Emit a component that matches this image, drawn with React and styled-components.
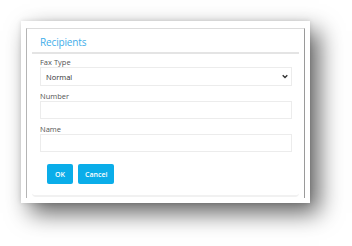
import React from "react";
import styled, { createGlobalStyle } from "styled-components";

const GlobalStyle = createGlobalStyle`
  html, body {
    margin: 0;
    padding: 0;
    background: #fff;
  }
  body {
    font-family: "Open Sans", "Liberation Sans", sans-serif;
  }
`;

const Page = styled.div`
  width: 352px;
  height: 246px;
  padding: 21px 0 0 21px;
  box-sizing: border-box;
  overflow: hidden;
`;

const Paper = styled.div`
  width: 289px;
  height: 182px;
  background: #fff;
  padding: 7px 0 0 5px;
  box-sizing: border-box;
  box-shadow: 9px 10px 22px rgba(0, 0, 0, 0.62), 0 0 5px rgba(0, 0, 0, 0.12);
`;

const Frame = styled.div`
  width: 279px;
  height: 170px;
  box-sizing: border-box;
  border-left: 1px solid #b4b4b4;
  border-top: 1px solid #dcdcdc;
  border-right: 1px solid #9a9a9a;
  padding: 0 5px;
`;

const Panel = styled.div`
  border-bottom: 2px solid #f1f1f1;
  border-radius: 0 0 4px 4px;
  padding-bottom: 11px;
`;

const Header = styled.div`
  height: 23px;
  border-bottom: 2px solid #e4e4e4;
  padding: 0 8px;
  display: flex;
  align-items: flex-end;
`;

const Title = styled.h3`
  margin: 0 0 3px;
  font-size: 10px;
  font-weight: 400;
  letter-spacing: -0.15px;
  color: #3eaeea;
  line-height: 14px;
`;

const Form = styled.form`
  padding: 4px 7px 0 8px;
  display: flex;
  flex-direction: column;
`;

const Group = styled.div`
  display: flex;
  flex-direction: column;
  margin-bottom: 6px;
`;

const Label = styled.label`
  font-size: 7.5px;
  line-height: 9px;
  height: 9px;
  color: #555;
`;

const SelectWrap = styled.div`
  position: relative;
`;

const Select = styled.select`
  appearance: none;
  display: block;
  width: 100%;
  height: 19px;
  box-sizing: border-box;
  border: 1px solid #ececec;
  border-radius: 0;
  background: #fff;
  font-family: inherit;
  font-size: 7.5px;
  color: #333;
  padding: 0 0 0 5px;
  margin: 0;
  outline: none;
`;

const Chevron = styled.svg`
  position: absolute;
  right: 4px;
  top: 7px;
  width: 6px;
  height: 5px;
  pointer-events: none;
`;

const Input = styled.input`
  display: block;
  width: 100%;
  height: 18px;
  box-sizing: border-box;
  border: 1px solid #ececec;
  background: #fff;
  margin: 0;
  outline: none;
`;

const Actions = styled.div`
  display: flex;
  gap: 5px;
  padding: 6px 0 0 7px;
`;

const Button = styled.button`
  height: 20px;
  padding: 0 ${(p) => p.$pad || 7}px;
  border: none;
  border-radius: 2px;
  background: #0aade9;
  color: #fff;
  font-family: inherit;
  font-size: 7px;
  font-weight: 600;
  cursor: pointer;
`;

export default function App() {
  return (
    <>
      <GlobalStyle />
      <Page>
        <Paper>
          <Frame>
            <Panel>
              <Header>
                <Title>Recipients</Title>
              </Header>
              <Form onSubmit={(e) => e.preventDefault()}>
                <Group>
                  <Label>Fax Type</Label>
                  <SelectWrap>
                    <Select defaultValue="normal">
                      <option value="normal">Normal</option>
                    </Select>
                    <Chevron viewBox="0 0 6 5">
                      <path d="M0.7 1.2 L3 3.5 L5.3 1.2" fill="none" stroke="#333" strokeWidth="1.4" />
                    </Chevron>
                  </SelectWrap>
                </Group>
                <Group>
                  <Label>Number</Label>
                  <Input type="text" />
                </Group>
                <Group>
                  <Label>Name</Label>
                  <Input type="text" />
                </Group>
                <Actions>
                  <Button $pad={8}>OK</Button>
                  <Button $pad={7}>Cancel</Button>
                </Actions>
              </Form>
            </Panel>
          </Frame>
        </Paper>
      </Page>
    </>
  );
}
